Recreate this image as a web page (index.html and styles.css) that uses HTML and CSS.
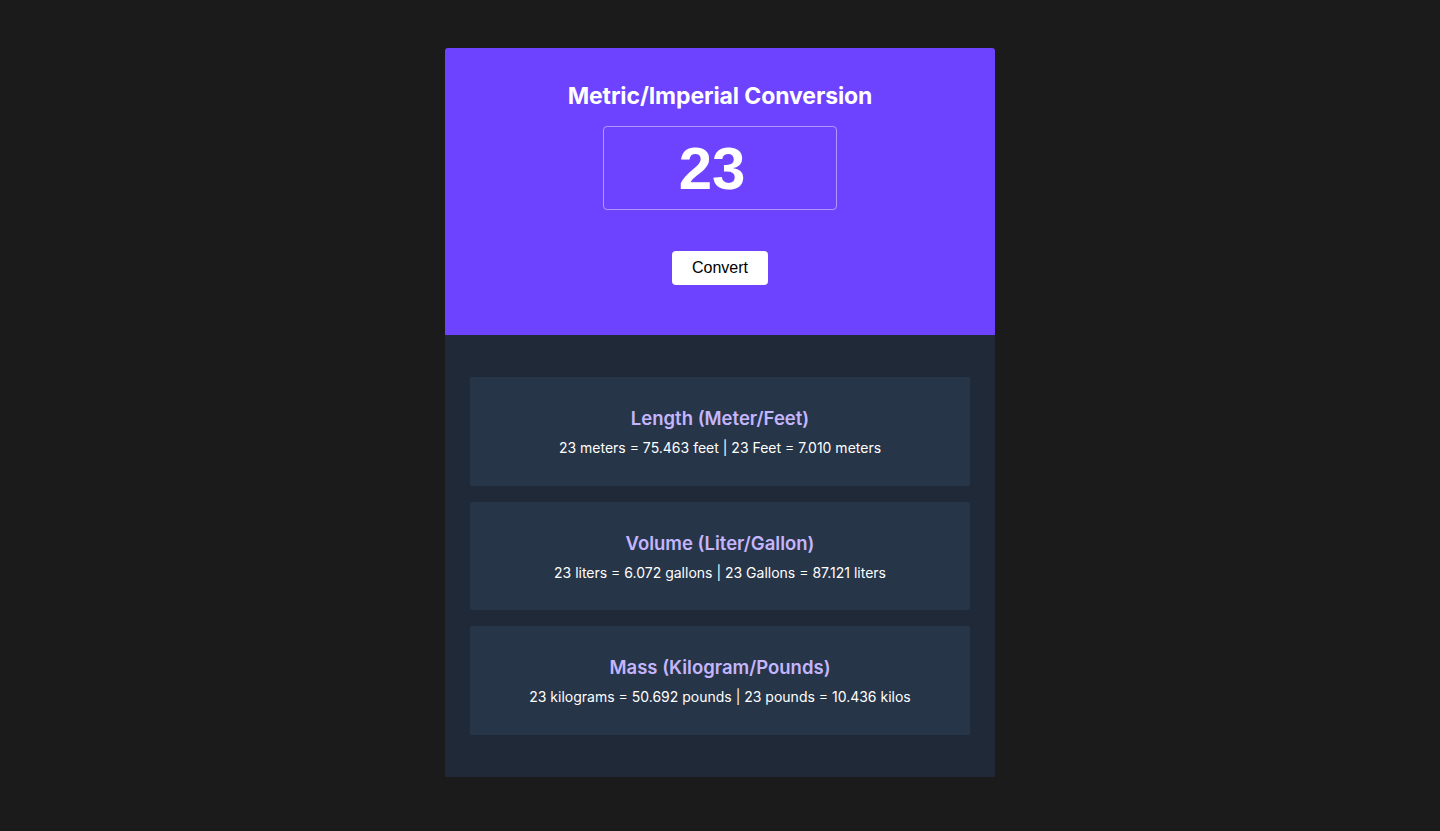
FILE: index.html
```html
<!DOCTYPE html>
<html lang="en">
<head>
<meta charset="utf-8">
<title>Metric/Imperial Conversion</title>
<link rel="stylesheet" href="styles.css">
</head>
<body>
<main class="app">
  <section class="hero">
    <h1 class="title">Metric/Imperial Conversion</h1>
    <input class="num-input" type="text" value="23">
    <button class="convert-btn" type="button">Convert</button>
  </section>
  <section class="results">
    <div class="result-card">
      <h2 class="result-title">Length (Meter/Feet)</h2>
      <p class="result-text">23 meters = 75.463 feet | 23 Feet = 7.010 meters</p>
    </div>
    <div class="result-card">
      <h2 class="result-title">Volume (Liter/Gallon)</h2>
      <p class="result-text">23 liters = 6.072 gallons | 23 Gallons = 87.121 liters</p>
    </div>
    <div class="result-card">
      <h2 class="result-title">Mass (Kilogram/Pounds)</h2>
      <p class="result-text">23 kilograms = 50.692 pounds | 23 pounds = 10.436 kilos</p>
    </div>
  </section>
</main>
</body>
</html>
```
FILE: styles.css
```css
* { box-sizing: border-box; }
html, body { margin: 0; padding: 0; }
body {
  background: #1b1b1b;
  font-family: Inter, "Noto Sans", sans-serif;
  color: #ffffff;
  display: flex;
  justify-content: center;
  padding-top: 48px;
  min-height: 831px;
}
.app {
  width: 550px;
  display: flex;
  flex-direction: column;
}
.hero {
  background: #6d43ff;
  border-radius: 3px 3px 0 0;
  padding: 34px 0 50px;
  display: flex;
  flex-direction: column;
  align-items: center;
}
.title {
  margin: 0;
  font-size: 23px;
  line-height: 29px;
  font-weight: 700;
  letter-spacing: -0.1px;
}
.num-input {
  margin-top: 15px;
  width: 234px;
  height: 84px;
  background: transparent;
  border: 1px solid rgba(255, 255, 255, 0.45);
  border-radius: 4px;
  color: #ffffff;
  font-family: "Liberation Sans", Arial, sans-serif;
  font-weight: 700;
  font-size: 60px;
  text-align: center;
  padding: 0 16px 0 0;
  outline: none;
}
.convert-btn {
  margin-top: 41px;
  width: 96px;
  height: 34px;
  background: #ffffff;
  color: #000000;
  border: none;
  border-radius: 4px;
  font-family: "Liberation Sans", Arial, sans-serif;
  font-size: 16px;
  padding: 0;
}
.results {
  background: #1f2937;
  padding: 42px 25px;
  display: flex;
  flex-direction: column;
  gap: 16px;
}
.result-card {
  background: #273549;
  border-radius: 2px;
  padding: 29px 10px 28.67px;
  display: flex;
  flex-direction: column;
  align-items: center;
  gap: 9px;
}
.result-title {
  margin: 0;
  font-size: 18.5px;
  line-height: 24px;
  font-weight: 600;
  color: #c4b5fd;
}
.result-text {
  margin: 0;
  font-size: 14px;
  line-height: 18px;
  color: #ffffff;
}
```
